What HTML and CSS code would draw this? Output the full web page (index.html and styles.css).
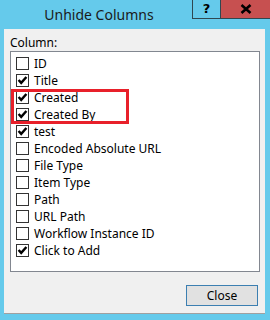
FILE: index.html
```html
<!DOCTYPE html>
<html lang="en">
<head>
    <meta charset="UTF-8">
    <title>Unhide Columns</title>
    <link rel="stylesheet" href="styles.css">
</head>
<body>
    <div class="window">
        <div class="title-bar">
            <div class="title">Unhide Columns</div>
            <div class="title-buttons">
                <div class="title-button help">?</div>
                <div class="title-button close">
                    <svg width="12" height="10" viewBox="0 0 12 10">
                        <path d="M1.5 1 L10.5 9 M10.5 1 L1.5 9" stroke="#000" stroke-width="2.6" fill="none"/>
                    </svg>
                </div>
            </div>
        </div>

        <div class="dialog">
            <div class="field-label">Column:</div>
            <div class="list-box">
                <div class="list-item"><span class="check-box"></span>ID</div>
                <div class="list-item"><span class="check-box checked"></span>Title</div>
                <div class="list-item"><span class="check-box checked"></span>Created</div>
                <div class="list-item"><span class="check-box checked"></span>Created By</div>
                <div class="list-item"><span class="check-box checked"></span>test</div>
                <div class="list-item"><span class="check-box"></span>Encoded Absolute URL</div>
                <div class="list-item"><span class="check-box"></span>File Type</div>
                <div class="list-item"><span class="check-box"></span>Item Type</div>
                <div class="list-item"><span class="check-box"></span>Path</div>
                <div class="list-item"><span class="check-box"></span>URL Path</div>
                <div class="list-item"><span class="check-box"></span>Workflow Instance ID</div>
                <div class="list-item"><span class="check-box checked"></span>Click to Add</div>

                <!-- highlight drawn over the two rows -->
                <div class="highlight"></div>
            </div>
            <div class="dialog-footer">
                <button class="dialog-button">Close</button>
            </div>
        </div>
    </div>
</body>
</html>
```

FILE: styles.css
```css
body {
    margin: 0;
    background-color: #65caeb;
    font-family: "Noto Sans", "Open Sans", sans-serif;
    color: #000;
}

.window {
    width: 270px;
    height: 320px;
    display: flex;
    flex-direction: column;
}

.title-bar {
    display: flex;
    height: 29px;
    flex-shrink: 0;
}

.title {
    flex: 1;
    text-align: center;
    font-size: 14px;
    line-height: 29px;
    color: #1a1a1a;
    padding-left: 6px;
}

.title-buttons {
    display: flex;
    align-items: flex-start;
}

.title-button {
    height: 19px;
    box-sizing: border-box;
    border: 1px solid #2f4750;
    border-top: none;
    display: flex;
    align-items: center;
    justify-content: center;
}

.title-button.help {
    width: 29px;
    font-family: "DejaVu Sans", sans-serif;
    font-weight: bold;
    font-size: 13px;
    line-height: 18px;
}

.title-button.close {
    width: 49px;
    background-color: #c75050;
    border-left: none;
    border-right: none;
}

.dialog {
    flex: 1;
    margin: 0 5px 6px 4px;
    background-color: #f0f0f0;
    border-bottom: 1px solid #a0a0a0;
    padding: 6px 5px 0 6px;
    display: flex;
    flex-direction: column;
}

.field-label {
    font-size: 12px;
    line-height: 16px;
}

.list-box {
    position: relative;
    height: 221px;
    box-sizing: border-box;
    border: 1px solid #828790;
    background: #fff;
    padding-top: 3px;
}

.list-item {
    display: flex;
    align-items: center;
    height: 17px;
    font-size: 12px;
    padding-left: 5px;
}

.check-box {
    width: 13px;
    height: 13px;
    box-sizing: border-box;
    border: 1px solid #333;
    background: #fff;
    margin-right: 5px;
    flex-shrink: 0;
}

.check-box.checked {
    background: #fff url("data:image/svg+xml;utf8,<svg xmlns='http://www.w3.org/2000/svg' width='11' height='11' viewBox='0 0 11 11'><path d='M1.6 5.0 L4.2 7.9 L9.4 2.0' stroke='black' stroke-width='2.4' fill='none'/></svg>") no-repeat center;
}

.highlight {
    position: absolute;
    left: 0;
    top: 37px;
    width: 118px;
    height: 35px;
    box-sizing: border-box;
    border: 3px solid #e8202a;
}

.dialog-footer {
    display: flex;
    justify-content: flex-end;
    padding: 13px 2px 0 0;
}

.dialog-button {
    width: 72px;
    height: 21px;
    box-sizing: border-box;
    border: 1px solid #3c7fb1;
    background: #e1e1e1;
    font-family: "Noto Sans", sans-serif;
    font-size: 12px;
    padding: 0;
    color: #000;
}
```
